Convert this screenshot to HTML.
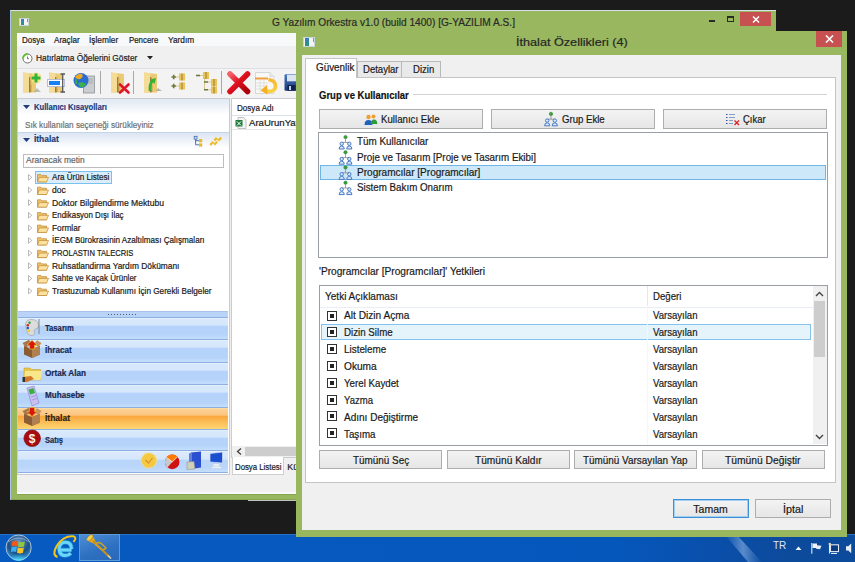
<!DOCTYPE html>
<html><head><meta charset="utf-8">
<style>
*{box-sizing:border-box;}
html,body{margin:0;padding:0;}
body{width:855px;height:562px;position:relative;overflow:hidden;background:#1b1b1b;font-family:"Liberation Sans",sans-serif;color:#1e1e1e;}
.a{position:absolute;}
.t{position:absolute;white-space:nowrap;line-height:1;-webkit-text-stroke:0.2px currentColor;transform-origin:0 0;}
.mw8{font-size:8.2px;}
.dl10{font-size:9.9px;}
</style></head><body>

<!-- MAIN WINDOW -->
<div class="a" id="mw" style="left:10px;top:10px;width:766px;height:490px;background:#98b75e;border-top:1px solid #d9e2ea;border-left:1px solid #a9c4e4;"></div>
<!-- main title icon -->
<div class="a" style="left:19px;top:18px;width:10px;height:8px;background:#f4f4f4;border:1px solid #c9d3d9;"></div>
<div class="a" style="left:20.5px;top:19px;width:3px;height:6px;background:linear-gradient(#3a7ac0,#2a9a70);"></div><div class="a" style="left:26.5px;top:19px;width:1px;height:3px;background:#5aa0d0;"></div>
<!-- min max close -->
<div class="a" style="left:709px;top:20px;width:6px;height:2px;background:#2a2a2a;"></div>
<div class="a" style="left:727px;top:16px;width:7px;height:6px;border:1px solid #2a2a2a;border-top-width:2px;"></div>
<div class="a" style="left:740px;top:12px;width:31px;height:14px;background:#c75050;"></div>
<svg class="a" style="left:752px;top:16px;" width="8" height="7" viewBox="0 0 8 7"><path d="M1 0.5L7 6.5M7 0.5L1 6.5" stroke="#fff" stroke-width="1.5"/></svg>

<!-- main content -->
<div class="a" style="left:17px;top:33px;width:753px;height:461px;background:#f0f0f0;"></div>
<div class="a" style="left:17px;top:33px;width:753px;height:13px;background:#f8f9fa;"></div>
<div class="a" style="left:17px;top:68px;width:753px;height:1px;background:#dcdfe4;"></div>
<div class="a" style="left:17px;top:69px;width:753px;height:29px;background:#f3f3f3;"></div>

<!-- menu -->
<!-- hatirlatma row -->
<svg class="a" style="left:22px;top:52.5px;" width="11" height="11" viewBox="0 0 11 11"><circle cx="5.5" cy="5.5" r="4.5" fill="#fff" stroke="#707070" stroke-width="1"/><path d="M1 5.5A4.5 4.5 0 0 1 5.5 1" fill="none" stroke="#58c020" stroke-width="1.8"/><path d="M5.5 3.5V5.7H7" stroke="#555" stroke-width="0.8" fill="none"/></svg>
<svg class="a" style="left:146.5px;top:56px;" width="6" height="3.5" viewBox="0 0 6 3.5"><path d="M0 0H6L3 3.5Z" fill="#222"/></svg>
<!-- toolbar separators -->
<div class="a" style="left:100px;top:71px;width:1px;height:23px;background:#a8a8a8;"></div>
<div class="a" style="left:133px;top:71px;width:1px;height:23px;background:#a8a8a8;"></div>
<div class="a" style="left:221px;top:71px;width:1px;height:23px;background:#a8a8a8;"></div>
<svg class="a" style="left:0;top:0;" width="300" height="100" viewBox="0 0 300 100">
 <defs>
  <linearGradient id="fg" x1="0" y1="0" x2="1" y2="1"><stop offset="0" stop-color="#f6e3a6"/><stop offset="1" stop-color="#d9b35a"/></linearGradient>
  <g id="fold"><path d="M0 0L13 1.5V20L0 20Z" fill="#ebca74"/><path d="M0 0L6.5 0.8V19.5L0 20Z" fill="#f4dc98"/><path d="M6 4.5L7.5 4.8V12L8.2 12.5V19.5L6 20Z" fill="#a27c30"/><path d="M8 5V19" stroke="#d8b458" stroke-width="1"/></g>
 </defs>
 <!-- icon1 folder + green plus -->
 <use href="#fold" x="23" y="72.5"/>
 <circle cx="36" cy="78" r="5.5" fill="#f8e27a" opacity=".8"/>
 <path d="M36 73.5V82.5M31.5 78H40.5" stroke="#32b43a" stroke-width="3"/>
 <path d="M37 88L41 92H34Z" fill="#999" opacity=".6"/>
 <!-- icon2 folder + text box -->
 <use href="#fold" x="49" y="72.5"/>
 <rect x="47.5" y="79.5" width="17" height="7" fill="#fff" stroke="#b8bcd8" stroke-width="1"/>
 <rect x="49" y="81" width="11" height="4" fill="#1a7ff0"/>
 <path d="M60.5 74H65M62.7 74V92M60.5 92H65" stroke="#555" stroke-width="1.3" fill="none"/>
 <!-- icon3 globe + server -->
 <rect x="83.5" y="76" width="11" height="17" fill="#c9ccd0" stroke="#8e9296" stroke-width="0.8"/>
 <path d="M85 79H93M85 81H93M85 83H93" stroke="#9aa0a4" stroke-width="0.7"/>
 <circle cx="81" cy="80.5" r="7.5" fill="#2a6fd0"/>
 <path d="M75 77Q78 73 82 74Q84 77 80 79Q77 80 75 77Z" fill="#f2a81c"/>
 <path d="M78 83Q83 81 86 84Q84 88 80 87Z" fill="#3ab14a"/>
 <path d="M75.5 79Q77 81 76 84" stroke="#3ab14a" stroke-width="1.5" fill="none"/>
 <!-- icon4 folder + red x -->
 <use href="#fold" x="111" y="72.5"/>
 <path d="M120 84.5L128.5 92.5M128.5 84.5L120 92.5" stroke="#e0142a" stroke-width="2.6" stroke-linecap="round"/>
 <!-- icon5 folder + green arrow -->
 <use href="#fold" x="144" y="72.5"/>
 <path d="M158 88L162 91H156Z" fill="#999" opacity=".7"/>
 <path d="M150 91Q149 84 153 80" stroke="#2fb33a" stroke-width="2.6" fill="none"/>
 <path d="M150.5 79.5L156 78L154.5 84Z" fill="#2fb33a"/>
 <!-- icon6 two rows -->
 <path d="M171.5 77H176M173.7 74.8V79.2" stroke="#6b7a3a" stroke-width="1.6"/><path d="M176 77H179" stroke="#d8c58c" stroke-width="1"/>
 <rect x="179" y="73.5" width="6" height="7" fill="#e8c45a"/><rect x="181.5" y="73.5" width="1" height="7" fill="#9a7a2a"/>
 <path d="M171.5 86H176M173.7 83.8V88.2" stroke="#6b7a3a" stroke-width="1.6"/><path d="M176 86H179" stroke="#d8c58c" stroke-width="1"/>
 <rect x="179" y="82.5" width="6" height="7" fill="#e8c45a"/><rect x="181.5" y="82.5" width="1" height="7" fill="#9a7a2a"/>
 <!-- icon7 tree -->
 <path d="M196 75.5H200" stroke="#6b7a3a" stroke-width="1.6"/><path d="M200 75.5H203" stroke="#d8c58c" stroke-width="1"/>
 <rect x="203" y="72" width="6" height="7" fill="#e8c45a"/><rect x="205.5" y="72" width="1" height="7" fill="#9a7a2a"/>
 <path d="M204.5 79V89.8" stroke="#d8c58c" stroke-width="1"/>
 <path d="M204 82H208M204 89.8H208" stroke="#6b7a3a" stroke-width="1.6"/>
 <path d="M208 82H211M208 89.8H211" stroke="#d8c58c" stroke-width="1"/>
 <rect x="211" y="79" width="6" height="7" fill="#e8c45a"/><rect x="213.5" y="79" width="1" height="7" fill="#9a7a2a"/>
 <rect x="211" y="86.5" width="6" height="7" fill="#e8c45a"/><rect x="213.5" y="86.5" width="1" height="7" fill="#9a7a2a"/>
 <!-- big red x -->
 <defs><linearGradient id="rx" x1="0" y1="0" x2="1" y2="1"><stop offset="0" stop-color="#f4606a"/><stop offset="0.45" stop-color="#e0101e"/><stop offset="1" stop-color="#a8000c"/></linearGradient>
 <linearGradient id="og" x1="0" y1="0" x2="0" y2="1"><stop offset="0" stop-color="#f8b830"/><stop offset="1" stop-color="#f8d040"/></linearGradient>
 <linearGradient id="fl" x1="0" y1="0" x2="0" y2="1"><stop offset="0" stop-color="#4a78c0"/><stop offset="1" stop-color="#1a3a78"/></linearGradient></defs>
 <path d="M230 74L247.5 91.5M247.5 74L230 91.5" stroke="url(#rx)" stroke-width="5.6" stroke-linecap="round"/>
 <!-- icon9 doc + orange arrow -->
 <path d="M255.5 72.5H270L274 76.5V93.5H255.5Z" fill="#f8f8f8" stroke="#cfcfcf" stroke-width="0.8"/>
 <path d="M270 72.5V76.5H274" fill="#e8e8e8" stroke="#cfcfcf" stroke-width="0.6"/>
 <rect x="255" y="77.5" width="13" height="2" fill="#f0a040"/>
 <path d="M256 83H268M256 86H268M256 89H268M260 80V92M264 80V92" stroke="#d8d8d8" stroke-width="0.7"/>
 <path d="M268.5 79.5Q276.5 81 275.5 87.5Q274 92.5 266 91" stroke="url(#og)" stroke-width="3.6" fill="none"/>
 <path d="M260.5 90.5L267 85L267.5 94.5Z" fill="#f6b020"/>
 <!-- floppy -->
 <rect x="284.5" y="74.2" width="14" height="16.5" rx="1.2" fill="url(#fl)"/>
 <rect x="287" y="74.8" width="9" height="6.5" fill="#dae4f0"/>
 <rect x="287.5" y="85" width="8" height="5.7" fill="#0c2250"/><rect x="289" y="86" width="2" height="4" fill="#c8d4e4"/>
</svg>

<!-- left nav pane -->
<div class="a" id="nav" style="left:17px;top:98px;width:213px;height:377px;background:#fff;border:1px solid #c8ccd2;"></div>

<!-- nav pane contents -->
<div class="a" style="left:18px;top:99px;width:211px;height:16px;background:linear-gradient(#e0e8f3,#ffffff);"></div>
<svg class="a" style="left:23px;top:105px;" width="7" height="4" viewBox="0 0 7 4"><path d="M0 0H7L3.5 4Z" fill="#1f3d7a"/></svg>
<div class="a" style="left:18px;top:132px;width:211px;height:1px;background:#c5d5ea;"></div>
<div class="a" style="left:18px;top:133px;width:211px;height:15px;background:linear-gradient(#dce5f2,#ffffff);"></div>
<svg class="a" style="left:23px;top:138px;" width="7" height="4" viewBox="0 0 7 4"><path d="M0 0H7L3.5 4Z" fill="#1f3d7a"/></svg>
<svg class="a" style="left:188px;top:132px;" width="38" height="18" viewBox="188 132 38 18">
 <rect x="194.2" y="136.3" width="2.8" height="2.8" fill="#dbe6f4" stroke="#3a68b0" stroke-width="0.8"/>
 <path d="M195.6 139.2V144.8H199M195.6 140.7H199" stroke="#3a68b0" stroke-width="0.9" fill="none"/>
 <rect x="199" y="139.1" width="3.2" height="3.2" fill="#eab622"/><rect x="199" y="143.4" width="3.2" height="3.2" fill="#eab622"/>
 <path d="M213.5 139.5L216 137L218 139L220.5 136.8L222 138.5L219 141.5L217 139.5L215 141.5Z" fill="#ecbc30"/>
 <path d="M209.5 144L212.5 141L214.5 143L216.5 141L218 142.5L215 145.5L213 143.5L211 146Z" fill="#ecbc30"/>
</svg>
<div class="a" style="left:22.7px;top:153.7px;width:201.5px;height:14px;background:#fff;border:1px solid #bdbdbd;"></div>
<div class="a" style="left:35px;top:171.3px;width:76.5px;height:12.4px;background:#d9edfb;border:1px solid #7cc0ee;"></div>
<svg class="a" style="left:0;top:0;" width="60" height="310" viewBox="0 0 60 310">
 <defs><g id="ofold"><path d="M0.5 1.2H4L5 2.2H9.5V8.5H0.5Z" fill="#eec06a" stroke="#c08a38" stroke-width="0.7"/><path d="M2.2 4H11.5L9.6 8.5H0.5Z" fill="#fbe2a0" stroke="#c08a38" stroke-width="0.7"/></g></defs>
 <use href="#ofold" x="37" y="173.4"/><path d="M28.5 174.6L31.8 177.4L28.5 180.2Z" fill="none" stroke="#a6a6a6" stroke-width="0.8"/><use href="#ofold" x="37" y="186.0"/><path d="M28.5 187.2L31.8 190.0L28.5 192.8Z" fill="none" stroke="#a6a6a6" stroke-width="0.8"/><use href="#ofold" x="37" y="198.6"/><path d="M28.5 199.8L31.8 202.6L28.5 205.4Z" fill="none" stroke="#a6a6a6" stroke-width="0.8"/><use href="#ofold" x="37" y="211.3"/><path d="M28.5 212.5L31.8 215.3L28.5 218.1Z" fill="none" stroke="#a6a6a6" stroke-width="0.8"/><use href="#ofold" x="37" y="223.9"/><path d="M28.5 225.1L31.8 227.9L28.5 230.7Z" fill="none" stroke="#a6a6a6" stroke-width="0.8"/><use href="#ofold" x="37" y="236.5"/><path d="M28.5 237.7L31.8 240.5L28.5 243.3Z" fill="none" stroke="#a6a6a6" stroke-width="0.8"/><use href="#ofold" x="37" y="249.1"/><path d="M28.5 250.3L31.8 253.1L28.5 255.9Z" fill="none" stroke="#a6a6a6" stroke-width="0.8"/><use href="#ofold" x="37" y="261.7"/><path d="M28.5 262.9L31.8 265.7L28.5 268.5Z" fill="none" stroke="#a6a6a6" stroke-width="0.8"/><use href="#ofold" x="37" y="274.4"/><path d="M28.5 275.6L31.8 278.4L28.5 281.2Z" fill="none" stroke="#a6a6a6" stroke-width="0.8"/><use href="#ofold" x="37" y="287.0"/><path d="M28.5 288.2L31.8 291.0L28.5 293.8Z" fill="none" stroke="#a6a6a6" stroke-width="0.8"/>
</svg>
<!-- splitter -->
<div class="a" style="left:18px;top:311px;width:210px;height:7px;background:#b9d4f6;border-top:1px solid #a8c4ea;border-bottom:1px solid #8fb1e0;"></div>
<div class="a" style="left:108px;top:313.5px;width:30px;height:1px;background:repeating-linear-gradient(90deg,#4a5a70 0 1px,transparent 1px 3px);"></div>
<div class="a" style="left:18px;top:318px;width:210px;height:22px;background:linear-gradient(#eef5fe 0px,#d9e9fc 1px,#d6e6fb 7px,#b5d3fa 8.5px,#b6d4fa 80%,#c6defc 100%);border-bottom:1px solid #8eb0e0;"></div>
<div class="a" style="left:18px;top:340px;width:210px;height:23px;background:linear-gradient(#eef5fe 0px,#d9e9fc 1px,#d6e6fb 7px,#b5d3fa 8.5px,#b6d4fa 80%,#c6defc 100%);border-bottom:1px solid #8eb0e0;"></div>
<div class="a" style="left:18px;top:363px;width:210px;height:22px;background:linear-gradient(#eef5fe 0px,#d9e9fc 1px,#d6e6fb 7px,#b5d3fa 8.5px,#b6d4fa 80%,#c6defc 100%);border-bottom:1px solid #8eb0e0;"></div>
<div class="a" style="left:18px;top:385px;width:210px;height:23px;background:linear-gradient(#eef5fe 0px,#d9e9fc 1px,#d6e6fb 7px,#b5d3fa 8.5px,#b6d4fa 80%,#c6defc 100%);border-bottom:1px solid #8eb0e0;"></div>
<div class="a" style="left:18px;top:408px;width:210px;height:22px;background:linear-gradient(#fde4b4 0px,#fcd296 1px,#fbc57e 7px,#faa73e 8.5px,#fbb850 60%,#fdd574 100%);border-bottom:1px solid #8eb0e0;"></div>
<div class="a" style="left:18px;top:430px;width:210px;height:21px;background:linear-gradient(#eef5fe 0px,#d9e9fc 1px,#d6e6fb 7px,#b5d3fa 8.5px,#b6d4fa 80%,#c6defc 100%);border-bottom:1px solid #8eb0e0;"></div>
<!-- bottom bar -->
<div class="a" style="left:18px;top:451px;width:210px;height:22px;background:linear-gradient(#eef5fe 0px,#dceafc 1px,#d6e6fb 8px,#b8d5fa 9.5px,#bad6fa 80%,#c6defc 100%);border-bottom:1px solid #8eb0e0;"></div>
<!-- right list pane -->
<div class="a" id="list" style="left:231px;top:98px;width:540px;height:360px;background:#fff;border:1px solid #c8ccd2;"></div>

<svg class="a" style="left:0;top:300px;" width="230" height="180" viewBox="0 300 230 180">
 <!-- palette -->
 <path d="M26 327Q24 320 31 319.5Q38 319.5 38.5 325Q38.5 329 35.5 329Q33 330 34.5 332.5Q35 335.5 31 335.5Q27 335.5 26 327Z" fill="#dcdcdc" stroke="#9a9a9a" stroke-width="0.6"/>
 <circle cx="29.5" cy="322.8" r="1.2" fill="#1fa030"/><circle cx="27.8" cy="325.2" r="1.2" fill="#e01818"/><circle cx="27.8" cy="328" r="1.2" fill="#1a50d8"/><circle cx="29" cy="330.8" r="1.2" fill="#f0d010"/>
 <path d="M39 319V334" stroke="#707070" stroke-width="0.8"/>
 <!-- box ihracat -->
 <path d="M22.5 343L29 339.8L32 344.5L25.5 347.5Z" fill="#a8784c"/>
 <path d="M33.5 344.5L37 340.2L41.5 343L38.5 347Z" fill="#c49468"/>
 <path d="M24 346L32 349L40 346V354.5L32 358L24 354.5Z" fill="#8c5c34"/>
 <path d="M32 349L40 346V354.5L32 358Z" fill="#b08050"/>
 <path d="M32 340.3L37 345H34.6V349H29.4V345H27Z" fill="#d81810" stroke="#f0c020" stroke-width="0.7"/>
 <!-- folder ortak alan -->
 <path d="M24 368H30L31.5 369.5H40.5V380H24Z" fill="#e8c848" stroke="#b89828" stroke-width="0.5"/>
 <path d="M25 371H42L40.5 380H24Z" fill="#f8e68a"/>
 <path d="M23 377L31 376L34 379L27 382H23Z" fill="#d07828"/>
 <rect x="22.5" y="377" width="2.5" height="5" fill="#333"/>
 <!-- phone muhasebe -->
 <path d="M27 388L34 386L39 403L32 406Z" fill="#c8c0f0" stroke="#8a80d0" stroke-width="0.6"/>
 <path d="M28.5 389.5L33.5 388L35 393L30 394.5Z" fill="#3ab040"/>
 <path d="M31 397L36 395.5M32 400L37 398.5" stroke="#9a90d8" stroke-width="0.8"/>
 <!-- box ithalat -->
 <path d="M22.5 411L29 407.8L32 412.5L25.5 415.5Z" fill="#a8784c"/>
 <path d="M33.5 412.5L37 408.2L41.5 411L38.5 415Z" fill="#c49468"/>
 <path d="M24 414L32 417L40 414V422.5L32 426L24 422.5Z" fill="#8c5c34"/>
 <path d="M32 417L40 414V422.5L32 426Z" fill="#b08050"/>
 <path d="M29.4 407.5H34.6V411.5H37L32 416.5L27 411.5H29.4Z" fill="#d81810" stroke="#f0c020" stroke-width="0.7"/>
 <!-- dollar -->
 <circle cx="32.2" cy="438.3" r="8.3" fill="#a80c10" stroke="#7a0608" stroke-width="0.6"/>
 <text x="32.2" y="443" text-anchor="middle" font-family="Liberation Sans" font-weight="bold" font-size="12" fill="#f4f4f4">$</text>
 <!-- bottom icons -->
 <circle cx="148.9" cy="460.5" r="7.6" fill="#f5c842" stroke="#f8dc80" stroke-width="1.4" stroke-dasharray="1.2 1"/>
 <path d="M145.5 460L148.5 463L152.5 458" stroke="#d8922a" stroke-width="1.2" fill="none"/>
 <circle cx="172.2" cy="461.9" r="7.3" fill="#d01212"/>
 <path d="M172.2 461.9L166.5 457.4A7.3 7.3 0 0 1 177.5 456.8Z" fill="#ff7a00"/>
 <path d="M172.2 461.9L167.5 467.5A7.3 7.3 0 0 1 166.5 457.4Z" fill="#c8c8c8"/>
 <path d="M172.2 461.9L166.5 457.4M172.2 461.9L177.5 456.8" stroke="#fff" stroke-width="0.8"/>
 <path d="M191 452.5L201 451.5V467.5L191 469Z" fill="#2a4fd0"/>
 <path d="M189 453.5L192 452.5V468.5L189 469Z" fill="#6080e0"/>
 <path d="M187 462L194 461.5L195 469L187 469.5Z" fill="#d0d0b8" stroke="#888" stroke-width="0.5"/>
 <path d="M210 453.5L222.5 452V463L210 462Z" fill="#1a50d0" stroke="#d8e0f0" stroke-width="0.7"/>
 <path d="M213.5 464V466.5H219V464Z" fill="#e8eef4"/><path d="M212 467.5H221" stroke="#f0f0f0" stroke-width="1.2"/>
</svg>
<!-- list pane contents -->
<div class="a" style="left:232px;top:99px;width:538px;height:17px;background:#fff;border-bottom:1px solid #dde3ea;"></div>
<div class="a" style="left:232px;top:116px;width:538px;height:13.5px;background:#fff;border-bottom:1px solid #e6e6e6;"></div>
<svg class="a" style="left:235px;top:117px;" width="12" height="12" viewBox="0 0 12 12"><path d="M3 0.5H8.5L11 3V11.5H3Z" fill="#f4f4f4" stroke="#aaa" stroke-width="0.7"/><rect x="0.5" y="3" width="7" height="6.5" fill="#1f7a3a"/><path d="M2 4.5L6 8.5M6 4.5L2 8.5" stroke="#fff" stroke-width="1"/></svg>
<!-- hscroll -->
<div class="a" style="left:232px;top:446px;width:538px;height:11px;background:#f0f0f0;"></div>
<div class="a" style="left:245px;top:447px;width:525px;height:9px;background:#cdcdcd;"></div>
<svg class="a" style="left:236px;top:448px;" width="6" height="7" viewBox="0 0 6 7"><path d="M5 0.5L1.5 3.5L5 6.5" stroke="#404040" stroke-width="1.3" fill="none"/></svg>
<!-- tabs bottom -->
<div class="a" style="left:232px;top:457px;width:52px;height:18px;background:#fff;border:1px solid #cfcfcf;border-top:none;"></div>
<div class="a" style="left:17px;top:492px;width:279px;height:1.5px;background:#f8f8fa;"></div>
<div class="a" style="left:17px;top:493.5px;width:279px;height:1px;background:#86a650;"></div>
<div class="a" style="left:11px;top:498.5px;width:285px;height:1px;background:#86a650;"></div>
<div class="a" style="left:248px;top:499.5px;width:48px;height:1px;background:#c0c4bc;"></div>
<!-- main texts -->
<div class="t" style="left:272.00px;top:17.02px;font-size:10.8px;color:#2a2a2a;transform:scaleX(0.9374);">G Yazılım Orkestra v1.0 (build 1400) [G-YAZILIM A.S.]</div>
<div class="t" style="left:21.50px;top:35.84px;font-size:8.9px;color:#1a1a1a;transform:scaleX(0.9024);">Dosya</div>
<div class="t" style="left:54.30px;top:35.84px;font-size:8.9px;color:#1a1a1a;transform:scaleX(0.9138);">Araçlar</div>
<div class="t" style="left:89.30px;top:35.84px;font-size:8.9px;color:#1a1a1a;transform:scaleX(0.9428);">İşlemler</div>
<div class="t" style="left:128.60px;top:35.84px;font-size:8.9px;color:#1a1a1a;transform:scaleX(0.8862);">Pencere</div>
<div class="t" style="left:167.70px;top:35.84px;font-size:8.9px;color:#1a1a1a;transform:scaleX(0.9373);">Yardım</div>
<div class="t" style="left:35.50px;top:53.63px;font-size:8.9px;color:#1a1a1a;transform:scaleX(0.9377);">Hatırlatma Öğelerini Göster</div>
<div class="t" style="left:33.60px;top:102.78px;font-size:9.2px;color:#1c3a78;font-weight:700;transform:scaleX(0.8336);">Kullanıcı Kısayolları</div>
<div class="t" style="left:25.30px;top:120.64px;font-size:8.9px;color:#707070;transform:scaleX(0.9219);">Sık kullanılan seçeneği sürükleyiniz</div>
<div class="t" style="left:33.50px;top:135.08px;font-size:9.2px;color:#1c3a78;font-weight:700;transform:scaleX(0.9127);">İthalat</div>
<div class="t" style="left:25.80px;top:156.44px;font-size:8.9px;color:#666666;transform:scaleX(0.9518);">Aranacak metin</div>
<div class="t" style="left:51.50px;top:173.34px;font-size:8.9px;color:#1a1a1a;transform:scaleX(0.9091);">Ara Ürün Listesi</div>
<div class="t" style="left:51.50px;top:185.96px;font-size:8.9px;color:#1a1a1a;transform:scaleX(0.9572);">doc</div>
<div class="t" style="left:51.50px;top:198.58px;font-size:8.9px;color:#1a1a1a;transform:scaleX(0.9662);">Doktor Bilgilendirme Mektubu</div>
<div class="t" style="left:51.50px;top:211.20px;font-size:8.9px;color:#1a1a1a;transform:scaleX(0.8892);">Endikasyon Dışı İlaç</div>
<div class="t" style="left:51.50px;top:223.81px;font-size:8.9px;color:#1a1a1a;transform:scaleX(0.9353);">Formlar</div>
<div class="t" style="left:51.50px;top:236.44px;font-size:8.9px;color:#1a1a1a;transform:scaleX(0.9127);">İEGM Bürokrasinin Azaltılması Çalışmaları</div>
<div class="t" style="left:51.50px;top:249.06px;font-size:8.9px;color:#1a1a1a;transform:scaleX(0.8536);">PROLASTIN TALECRIS</div>
<div class="t" style="left:51.50px;top:261.67px;font-size:8.9px;color:#1a1a1a;transform:scaleX(0.9414);">Ruhsatlandirma Yardım Dökümanı</div>
<div class="t" style="left:51.50px;top:274.29px;font-size:8.9px;color:#1a1a1a;transform:scaleX(0.9015);">Sahte ve Kaçak Ürünler</div>
<div class="t" style="left:51.50px;top:286.91px;font-size:8.9px;color:#1a1a1a;transform:scaleX(0.9230);">Trastuzumab Kullanımı İçin Gerekli Belgeler</div>
<div class="t" style="left:45.30px;top:323.78px;font-size:9.2px;color:#1a2a50;font-weight:700;transform:scaleX(0.8333);">Tasarım</div>
<div class="t" style="left:45.30px;top:345.78px;font-size:9.2px;color:#1a2a50;font-weight:700;transform:scaleX(0.8858);">İhracat</div>
<div class="t" style="left:45.30px;top:368.78px;font-size:9.2px;color:#1a2a50;font-weight:700;transform:scaleX(0.8889);">Ortak Alan</div>
<div class="t" style="left:45.30px;top:390.78px;font-size:9.2px;color:#1a2a50;font-weight:700;transform:scaleX(0.8812);">Muhasebe</div>
<div class="t" style="left:45.30px;top:413.78px;font-size:9.2px;color:#2a2010;font-weight:700;transform:scaleX(0.9238);">İthalat</div>
<div class="t" style="left:45.30px;top:435.78px;font-size:9.2px;color:#1a2a50;font-weight:700;transform:scaleX(0.8193);">Satış</div>
<div class="t" style="left:237.40px;top:103.84px;font-size:8.9px;color:#1a1a1a;transform:scaleX(0.9097);">Dosya Adı</div>
<div class="t" style="left:248.80px;top:118.54px;font-size:8.9px;color:#1a1a1a;transform:scaleX(1.0800);">AraUrunYayinlari</div>
<div class="t" style="left:234.70px;top:462.73px;font-size:8.9px;color:#1a1a1a;transform:scaleX(0.8791);">Dosya Listesi</div>
<div class="t" style="left:287.30px;top:462.73px;font-size:8.9px;color:#1a1a1a;">Küçük</div>
<!-- DIALOG -->
<div class="a" id="dlg" style="left:296px;top:31px;width:551px;height:506px;background:#98b75e;"></div>
<div class="a" style="left:303px;top:37px;width:12px;height:10px;background:#f4f4f4;border:1px solid #c9d3d9;"></div>
<div class="a" style="left:304.5px;top:38px;width:4px;height:8px;background:linear-gradient(#3a7ac0,#2a9a70);"></div><div class="a" style="left:312.5px;top:38px;width:1.2px;height:4px;background:#5aa0d0;"></div>
<div class="a" style="left:816px;top:31px;width:26px;height:16px;background:#c75050;"></div>
<svg class="a" style="left:825px;top:35px;" width="9" height="8" viewBox="0 0 9 8"><path d="M1 0.5L8 7.5M8 0.5L1 7.5" stroke="#fff" stroke-width="1.6"/></svg>
<div class="a" style="left:302px;top:55px;width:539px;height:475px;background:#f0f0f0;"></div>

<!-- dialog contents -->
<!-- tabs -->
<div class="a" style="left:357px;top:60.5px;width:45px;height:17px;background:#e9e9e9;border:1px solid #b9b9b9;border-bottom:none;"></div>
<div class="a" style="left:401px;top:60.5px;width:39.5px;height:17px;background:#e9e9e9;border:1px solid #b9b9b9;border-bottom:none;"></div>
<div class="a" style="left:305.3px;top:77px;width:530.5px;height:406px;background:#fff;border:1px solid #c4c4c4;"></div>
<div class="a" style="left:305.3px;top:58.4px;width:51.7px;height:19.6px;background:#fff;border:1px solid #c4c4c4;border-bottom:none;"></div>
<!-- group -->
<div class="a" style="left:413px;top:94px;width:414px;height:1px;background:#d2d2d2;"></div>
<div class="a" style="left:319.3px;top:109.3px;width:164px;height:19.5px;background:linear-gradient(#f3f3f3,#e6e6e6);border:1px solid #adadad;"></div>
<div class="a" style="left:491px;top:109.3px;width:164px;height:19.5px;background:linear-gradient(#f3f3f3,#e6e6e6);border:1px solid #adadad;"></div>
<div class="a" style="left:663.3px;top:109.3px;width:164px;height:19.5px;background:linear-gradient(#f3f3f3,#e6e6e6);border:1px solid #adadad;"></div>
<!-- users list -->
<div class="a" style="left:318.2px;top:132.3px;width:509.5px;height:126px;background:#fff;border:1px solid #9a9ea5;"></div>
<div class="a" style="left:320.2px;top:164.8px;width:506px;height:14.8px;background:#cde8f8;border:1px solid #6fb6e6;"></div>
<!-- grid -->
<div class="a" style="left:318.5px;top:285.4px;width:509px;height:160.5px;background:#fff;border:1px solid #9a9ea5;"></div>
<div class="a" style="left:319.5px;top:306.5px;width:493px;height:1px;background:#e8eef4;"></div>
<div class="a" style="left:646.7px;top:286.4px;width:1px;height:20px;background:#e4e8ee;"></div>
<div class="a" style="left:320.6px;top:323.9px;width:490px;height:16.6px;background:#e5f3fb;border:1px solid #84c4ec;"></div>
<div class="a" style="left:646.7px;top:307.5px;width:1px;height:137px;background:#f5f7fa;"></div>
<div class="a" style="left:326.5px;top:310.5px;width:10px;height:10px;border:1px solid #333;background:#fff;"></div><div class="a" style="left:329.5px;top:313.5px;width:4px;height:4px;background:#222;"></div>
<div class="a" style="left:326.5px;top:327.2px;width:10px;height:10px;border:1px solid #333;background:#fff;"></div><div class="a" style="left:329.5px;top:330.2px;width:4px;height:4px;background:#222;"></div>
<div class="a" style="left:326.5px;top:344.0px;width:10px;height:10px;border:1px solid #333;background:#fff;"></div><div class="a" style="left:329.5px;top:347.0px;width:4px;height:4px;background:#222;"></div>
<div class="a" style="left:326.5px;top:360.7px;width:10px;height:10px;border:1px solid #333;background:#fff;"></div><div class="a" style="left:329.5px;top:363.7px;width:4px;height:4px;background:#222;"></div>
<div class="a" style="left:326.5px;top:377.7px;width:10px;height:10px;border:1px solid #333;background:#fff;"></div><div class="a" style="left:329.5px;top:380.7px;width:4px;height:4px;background:#222;"></div>
<div class="a" style="left:326.5px;top:394.5px;width:10px;height:10px;border:1px solid #333;background:#fff;"></div><div class="a" style="left:329.5px;top:397.5px;width:4px;height:4px;background:#222;"></div>
<div class="a" style="left:326.5px;top:411.3px;width:10px;height:10px;border:1px solid #333;background:#fff;"></div><div class="a" style="left:329.5px;top:414.3px;width:4px;height:4px;background:#222;"></div>
<div class="a" style="left:326.5px;top:428.4px;width:10px;height:10px;border:1px solid #333;background:#fff;"></div><div class="a" style="left:329.5px;top:431.4px;width:4px;height:4px;background:#222;"></div>
<!-- vscroll -->
<div class="a" style="left:812.5px;top:286.4px;width:14px;height:158px;background:#f0f0f0;"></div>
<div class="a" style="left:813.5px;top:301.4px;width:11.5px;height:56px;background:#cdcdcd;"></div>
<svg class="a" style="left:815px;top:291px;" width="9" height="6" viewBox="0 0 9 6"><path d="M1 5L4.5 1.5L8 5" stroke="#444" stroke-width="1.4" fill="none"/></svg>
<svg class="a" style="left:815px;top:434px;" width="9" height="6" viewBox="0 0 9 6"><path d="M1 1L4.5 4.5L8 1" stroke="#444" stroke-width="1.4" fill="none"/></svg>
<!-- bottom buttons -->
<div class="a" style="left:319.3px;top:450.4px;width:123px;height:19px;background:linear-gradient(#f3f3f3,#e6e6e6);border:1px solid #adadad;"></div>
<div class="a" style="left:446.7px;top:450.4px;width:123px;height:19px;background:linear-gradient(#f3f3f3,#e6e6e6);border:1px solid #adadad;"></div>
<div class="a" style="left:574.3px;top:450.4px;width:122.6px;height:19px;background:linear-gradient(#f3f3f3,#e6e6e6);border:1px solid #adadad;"></div>
<div class="a" style="left:701.9px;top:450.4px;width:123px;height:19px;background:linear-gradient(#f3f3f3,#e6e6e6);border:1px solid #adadad;"></div>
<!-- ok cancel -->
<div class="a" style="left:672.5px;top:499.4px;width:76px;height:19px;background:linear-gradient(#f3f3f3,#e6e6e6);border:1px solid #3c8fd8;box-shadow:inset 0 0 0 1px #9fd0f2;"></div>
<div class="a" style="left:755px;top:499.4px;width:76px;height:19px;background:linear-gradient(#f3f3f3,#e6e6e6);border:1px solid #adadad;"></div>
<svg class="a" style="left:0;top:0;" width="855" height="562" viewBox="0 0 855 562">
 <defs>
  <g id="grp">
   <circle cx="7" cy="1.9" r="1.7" fill="#3aa040" stroke="#1e7a28" stroke-width="0.5"/>
   <path d="M7 3.6V7.2M3.2 7.2H10.8" stroke="#8a8a8a" stroke-width="0.8"/>
   <circle cx="3.2" cy="8.6" r="1.7" fill="#dbe8f8" stroke="#3a6fc0" stroke-width="0.9"/>
   <circle cx="10.8" cy="8.6" r="1.7" fill="#dbe8f8" stroke="#3a6fc0" stroke-width="0.9"/>
   <path d="M0.6 13.8Q0.6 10.8 3.2 10.8Q5.8 10.8 5.8 13.8Z" fill="#dbe8f8" stroke="#3a6fc0" stroke-width="0.9"/>
   <path d="M8.2 13.8Q8.2 10.8 10.8 10.8Q13.4 10.8 13.4 13.8Z" fill="#dbe8f8" stroke="#3a6fc0" stroke-width="0.9"/>
  </g>
 </defs>
 <use href="#grp" x="338.5" y="135.2"/><use href="#grp" x="338.5" y="150.4"/><use href="#grp" x="338.5" y="165.6"/><use href="#grp" x="338.5" y="180.8"/>
 <!-- kullanici ekle icon -->
 <circle cx="368.5" cy="117" r="2.2" fill="#f0a030"/><path d="M364.5 125Q364.5 120 368.5 120Q372.5 120 372.5 125Z" fill="#1f5fc0"/>
 <circle cx="373.5" cy="116.5" r="2" fill="#f0a030"/><path d="M370.5 124Q371 119.5 374 119.5Q377.3 119.5 377.3 124Z" fill="#2a9a3a"/>
 <!-- grup ekle icon -->
 <use href="#grp" x="544" y="112"/>
 <!-- cikar icon -->
 <path d="M726 114.5H727.5M726 117.5H727.5M726 120.5H727.5M726 123.5H727.5" stroke="#2a50a0" stroke-width="1.2"/><path d="M729 114.5H735M729 117.5H735M729 120.5H733M729 123.5H733" stroke="#6a88c0" stroke-width="0.8"/>
 <path d="M734.5 120.5L739 125M739 120.5L734.5 125" stroke="#e02020" stroke-width="1.3"/>
</svg>
<!-- dialog texts -->
<div class="t" style="left:515.70px;top:35.94px;font-size:11.6px;color:#262626;transform:scaleX(1.0903);">İthalat Özellikleri (4)</div>
<div class="t" style="left:315.50px;top:62.48px;font-size:10.5px;color:#1a1a1a;transform:scaleX(0.9398);">Güvenlik</div>
<div class="t" style="left:362.70px;top:64.18px;font-size:10.5px;color:#1a1a1a;transform:scaleX(0.9077);">Detaylar</div>
<div class="t" style="left:413.20px;top:64.18px;font-size:10.5px;color:#1a1a1a;transform:scaleX(0.9082);">Dizin</div>
<div class="t" style="left:318.70px;top:90.09px;font-size:10.6px;color:#111;font-weight:700;transform:scaleX(0.8972);">Grup ve Kullanıcılar</div>
<div class="t" style="left:380.80px;top:114.48px;font-size:10.5px;color:#1a1a1a;transform:scaleX(0.9210);">Kullanıcı Ekle</div>
<div class="t" style="left:561.70px;top:114.48px;font-size:10.5px;color:#1a1a1a;transform:scaleX(0.9146);">Grup Ekle</div>
<div class="t" style="left:742.60px;top:114.48px;font-size:10.5px;color:#1a1a1a;transform:scaleX(0.9006);">Çıkar</div>
<div class="t" style="left:357.20px;top:136.38px;font-size:10.5px;color:#1a1a1a;transform:scaleX(0.9412);">Tüm Kullanıcılar</div>
<div class="t" style="left:357.20px;top:151.57px;font-size:10.5px;color:#1a1a1a;transform:scaleX(0.9337);">Proje ve Tasarım [Proje ve Tasarım Ekibi]</div>
<div class="t" style="left:357.20px;top:166.78px;font-size:10.5px;color:#1a1a1a;transform:scaleX(0.9569);">Programcılar [Programcılar]</div>
<div class="t" style="left:357.20px;top:181.97px;font-size:10.5px;color:#1a1a1a;transform:scaleX(0.9308);">Sistem Bakım Onarım</div>
<div class="t" style="left:319.40px;top:266.17px;font-size:10.5px;color:#1a1a1a;transform:scaleX(0.9647);">&#x27;Programcılar [Programcılar]&#x27; Yetkileri</div>
<div class="t" style="left:325.00px;top:291.47px;font-size:10.5px;color:#1a1a1a;transform:scaleX(0.9556);">Yetki Açıklaması</div>
<div class="t" style="left:652.80px;top:291.47px;font-size:10.5px;color:#1a1a1a;transform:scaleX(0.9180);">Değeri</div>
<div class="t" style="left:343.90px;top:310.07px;font-size:10.5px;color:#1a1a1a;transform:scaleX(0.9647);">Alt Dizin Açma</div>
<div class="t" style="left:652.80px;top:310.07px;font-size:10.5px;color:#1a1a1a;transform:scaleX(0.9111);">Varsayılan</div>
<div class="t" style="left:343.90px;top:327.02px;font-size:10.5px;color:#1a1a1a;transform:scaleX(0.9273);">Dizin Silme</div>
<div class="t" style="left:652.80px;top:327.02px;font-size:10.5px;color:#1a1a1a;transform:scaleX(0.9111);">Varsayılan</div>
<div class="t" style="left:343.90px;top:343.97px;font-size:10.5px;color:#1a1a1a;transform:scaleX(0.9410);">Listeleme</div>
<div class="t" style="left:652.80px;top:343.97px;font-size:10.5px;color:#1a1a1a;transform:scaleX(0.9111);">Varsayılan</div>
<div class="t" style="left:343.90px;top:360.93px;font-size:10.5px;color:#1a1a1a;transform:scaleX(0.9662);">Okuma</div>
<div class="t" style="left:652.80px;top:360.93px;font-size:10.5px;color:#1a1a1a;transform:scaleX(0.9111);">Varsayılan</div>
<div class="t" style="left:343.90px;top:377.88px;font-size:10.5px;color:#1a1a1a;transform:scaleX(0.9264);">Yerel Kaydet</div>
<div class="t" style="left:652.80px;top:377.88px;font-size:10.5px;color:#1a1a1a;transform:scaleX(0.9111);">Varsayılan</div>
<div class="t" style="left:343.90px;top:394.82px;font-size:10.5px;color:#1a1a1a;transform:scaleX(0.9089);">Yazma</div>
<div class="t" style="left:652.80px;top:394.82px;font-size:10.5px;color:#1a1a1a;transform:scaleX(0.9111);">Varsayılan</div>
<div class="t" style="left:343.90px;top:411.77px;font-size:10.5px;color:#1a1a1a;transform:scaleX(0.9546);">Adını Değiştirme</div>
<div class="t" style="left:652.80px;top:411.77px;font-size:10.5px;color:#1a1a1a;transform:scaleX(0.9111);">Varsayılan</div>
<div class="t" style="left:343.90px;top:428.72px;font-size:10.5px;color:#1a1a1a;transform:scaleX(0.9307);">Taşıma</div>
<div class="t" style="left:652.80px;top:428.72px;font-size:10.5px;color:#1a1a1a;transform:scaleX(0.9111);">Varsayılan</div>
<div class="t" style="left:352.60px;top:454.77px;font-size:10.5px;color:#1a1a1a;transform:scaleX(0.9440);">Tümünü Seç</div>
<div class="t" style="left:474.70px;top:454.77px;font-size:10.5px;color:#1a1a1a;transform:scaleX(0.9684);">Tümünü Kaldır</div>
<div class="t" style="left:582.80px;top:454.77px;font-size:10.5px;color:#1a1a1a;transform:scaleX(0.9431);">Tümünü Varsayılan Yap</div>
<div class="t" style="left:725.00px;top:454.77px;font-size:10.5px;color:#1a1a1a;transform:scaleX(0.9801);">Tümünü Değiştir</div>
<div class="t" style="left:693.30px;top:504.07px;font-size:10.5px;color:#1a1a1a;">Tamam</div>
<div class="t" style="left:782.50px;top:504.07px;font-size:10.5px;color:#1a1a1a;transform:scaleX(1.0222);">İptal</div>
<!-- TASKBAR -->
<div class="a" style="left:0;top:534px;width:855px;height:28px;background:linear-gradient(90deg,#075ac0 0%,#0557bc 72%,#0a4ea8 85%,#0c4a9c 92%,#0c4a9c 100%);border-top:1px solid #2a70c0;"></div>
<svg class="a" style="left:700px;top:534px;" width="80" height="28" viewBox="0 0 80 28"><defs><linearGradient id="stk" x1="0" y1="0" x2="1" y2="0"><stop offset="0" stop-color="#8ab4e8" stop-opacity="0"/><stop offset="0.5" stop-color="#9cc0ec" stop-opacity="0.55"/><stop offset="1" stop-color="#8ab4e8" stop-opacity="0"/></linearGradient></defs><path d="M24 0H36L62 28H48Z" fill="url(#stk)"/></svg>
<div class="a" style="left:79px;top:534px;width:41px;height:27px;background:linear-gradient(160deg,#4d8ed6,#2d6fc0 60%,#2a68b8);border:1px solid #5e9ad8;"></div>
<svg class="a" style="left:0;top:534px;" width="855" height="28" viewBox="0 0 855 28">
 <defs>
  <radialGradient id="orb" cx="0.5" cy="0.3" r="0.75"><stop offset="0" stop-color="#6a9cc8"/><stop offset="0.55" stop-color="#1d4f86"/><stop offset="0.85" stop-color="#2a8cc8"/><stop offset="1" stop-color="#9ed4f0"/></radialGradient>
  <radialGradient id="orbglow" cx="0.5" cy="1" r="0.6"><stop offset="0" stop-color="#50e0ff" stop-opacity="0.9"/><stop offset="1" stop-color="#50e0ff" stop-opacity="0"/></radialGradient>
 </defs>
 <circle cx="18.6" cy="13.6" r="12.6" fill="url(#orb)" stroke="#b8d0e0" stroke-width="0.9"/>
 <ellipse cx="18.6" cy="21" rx="9" ry="6" fill="url(#orbglow)"/>
 <path d="M12.3 7.6Q14.8 6.2 17.8 7.4L17 12.2Q14.3 11.2 11.6 12.3Z" fill="#f2581c"/>
 <path d="M18.8 7.6Q21.8 9 24.8 7.6L24 12.6Q21 13.9 18 12.6Z" fill="#90c83a"/>
 <path d="M11.5 13.2Q14.2 12.2 16.8 13.2L16 18Q13.3 17 10.8 18Z" fill="#3aaef0"/>
 <path d="M17.8 13.6Q20.8 15.1 23.8 13.6L23 18.7Q20 20.1 17 18.7Z" fill="#fbc520"/>
 <path d="M8 8Q18.6 0 29.2 8" stroke="#ffffff" stroke-width="1" fill="none" opacity=".35"/>
 <!-- IE -->
 <path d="M71.5 16H59.3Q59.8 21.5 65.2 21.5Q68.6 21.5 70.8 19.2" stroke="#2a8ad0" stroke-width="4.4" fill="none"/>
 <path d="M59 14.8Q59.8 8.2 65.2 8.2Q71.5 8.2 71.5 15" stroke="#2a8ad0" stroke-width="4.4" fill="none"/>
 <path d="M71.5 16H59.3Q59.8 21.5 65.2 21.5Q68.6 21.5 70.8 19.2" stroke="#6ad8fa" stroke-width="3" fill="none"/>
 <path d="M59 14.8Q59.8 8.2 65.2 8.2Q71.5 8.2 71.5 15" stroke="#6ad8fa" stroke-width="3" fill="none"/>
 <path d="M57.5 23Q51.5 21 57 11.5Q63.5 1.5 73 2.2Q77.5 3 73.5 8" stroke="#f4c418" stroke-width="2" fill="none"/>
 <!-- trumpet -->
 <path d="M87 6.5L92.5 1L96 8.5L94.5 10Z" fill="#e0a820"/><ellipse cx="89.8" cy="3.8" rx="4" ry="2" transform="rotate(-45 89.8 3.8)" fill="#f4d050" stroke="#a07010" stroke-width="0.5"/>
 <path d="M93 7L109 22.5" stroke="#c89018" stroke-width="2"/>
 <path d="M95.5 10.5Q98 6.5 102.5 10.5L106 14Q103 17.5 99 13.5Z" fill="none" stroke="#d8a020" stroke-width="1.4"/>
 <path d="M108 21.5L111 24.5" stroke="#f0d8a0" stroke-width="1.6"/>
 <!-- tray -->
 <text x="773" y="15" font-family="Liberation Sans" font-size="10" fill="#dde8f4">TR</text>
 <path d="M795.5 16L798.5 12.5L801.5 16Z" fill="#f0f4f8"/>
  <path d="M811.8 9V19.8" stroke="#e0e8f2" stroke-width="1.1"/>
 <path d="M812.5 9.5H817V14H812.5Z" fill="#f0f4f8"/><path d="M817 11.2L821.5 11.8L820 15.2L816 14.8Z" fill="#e8eef6"/>
 <rect x="830.5" y="10.8" width="8" height="6.8" fill="#0a3a80" stroke="#e0e8f2" stroke-width="1.1"/>
 <path d="M829.5 9.5V19.5M831 19.5H837" stroke="#e0e8f2" stroke-width="1.1"/><circle cx="829.8" cy="10" r="1.2" fill="#e8d8b0"/>
 <path d="M846 12.2H848.3L851.2 9.5V19.2L848.3 16.5H846Z" fill="#e8eef6"/>
</svg>

<div class="a" style="left:296px;top:534px;width:551px;height:3px;background:#98b75e;"></div>

</body></html>
